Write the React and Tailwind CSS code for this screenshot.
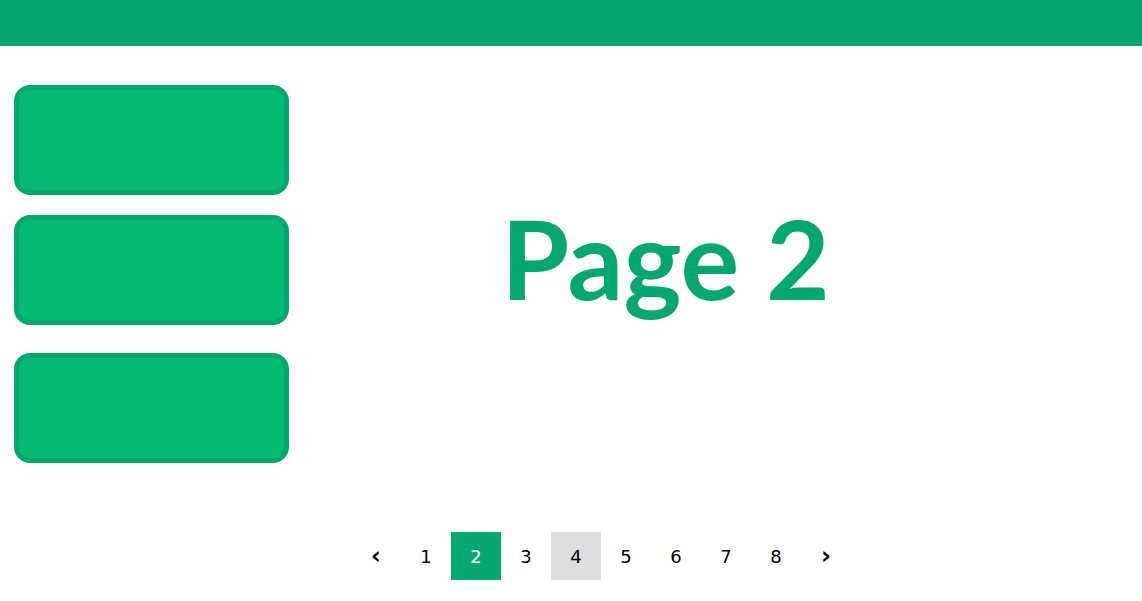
import React, { useState } from 'react';

const Card = ({ className = '' }) => (
    <div className={`w-[275px] h-[110px] rounded-[16px] border-[5px] border-[#04a86e] bg-[#07ba74] ${className}`}></div>
);

const App = () => {
    const [page, setPage] = useState(2);
    const items = ['‹', 1, 2, 3, 4, 5, 6, 7, 8, '›'];

    return (
        <div className="w-[1142px] h-[601px] bg-white overflow-hidden" style={{ fontFamily: '"DejaVu Sans", Verdana, sans-serif' }}>
            {/* Top bar */}
            <div className="h-[46px] bg-[#04a86e]"></div>

            <div className="flex">
                {/* Side cards */}
                <div className="flex flex-col pl-[14px] pt-[39px]">
                    <Card />
                    <Card className="mt-[20px]" />
                    <Card className="mt-[28px]" />
                </div>

                {/* Main */}
                <div className="flex-1 flex justify-center pr-[100px] pt-[156px]">
                    <h1 className="text-[110px] font-bold leading-none text-[#04a86e]" style={{ fontFamily: 'Lato, "Open Sans", sans-serif' }}>
                        Page 2
                    </h1>
                </div>
            </div>

            {/* Pagination */}
            <div className="flex justify-center pl-[60px] mt-[69px]">
                {items.map((item, i) => (
                    <button
                        key={i}
                        onClick={() => typeof item === 'number' && setPage(item)}
                        className={`w-[50px] h-[48px] flex items-center justify-center ${typeof item === 'number' ? 'text-[18px]' : 'text-[24px] font-bold'} ${item === page
                            ? 'bg-[#04a86e] text-white'
                            : item === 4
                                ? 'bg-[#dddddd] text-black'
                                : 'text-black'
                            }`}
                    >
                        {item}
                    </button>
                ))}
            </div>
        </div>
    );
};

export default App;
